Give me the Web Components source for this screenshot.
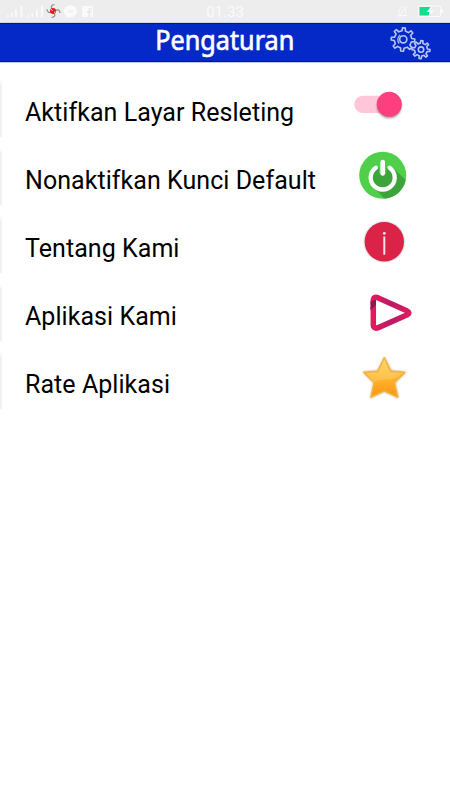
<!DOCTYPE html>
<html lang="id">
<head>
<meta charset="utf-8">
<title>Pengaturan</title>
<style>
  body {
    margin: 0;
    background: #fff;
    font-family: Roboto, "Liberation Sans", sans-serif;
  }
</style>
</head>
<body>
<settings-page></settings-page>

<script>
class StatusBar extends HTMLElement {
  constructor() {
    super();
    this.shadowDom = this.attachShadow({ mode: 'open' });
  }

  connectedCallback() {
    this.render();
  }

  render() {
    this.shadowDom.innerHTML = `
        <style>
          :host {
            display: grid;
            grid-template-columns: 200px 50px 200px;
            height: 23px;
            box-sizing: border-box;
            background: #ededed;
            border-bottom: 1px solid #d5d5e0;
          }

          svg {
            display: block;
          }

          .clock {
            color: #fbfbfb;
            font-size: 15px;
            line-height: 24px;
            text-align: center;
            white-space: nowrap;
          }
        </style>

        <svg width="200" height="22" viewBox="0 0 200 22">
          <g fill="#fafafa">
            <path d="M7 15h1.600v2H7zM11 13h1.600v4H11zM15 9.500h1.800v7.500H15zM20.500 6h2v11h-2z"/>
            <path d="M27.500 15h1.600v2h-1.600zM31.500 13h1.600v4h-1.600zM36 9.500h1.800v7.500H36zM41 6h2v11h-2z"/>
            <path d="M70.500 5.200c-3.700 0-6.500 2.600-6.500 6 0 1.900.9 3.500 2.300 4.600v2.500l2.200-1.300c.6.200 1.300.2 2 .2 3.700 0 6.500-2.600 6.500-6s-2.800-6-6.500-6z"/>
            <rect x="82" y="6" width="11" height="11" rx=".8"/>
          </g>
          <path d="M66.800 13l3-3.200 1.700 1.700 2.800-1.700-3 3.200-1.700-1.700z" fill="#e8e8e8"/>
          <path d="M88.500 17v-4.300H87V11h1.500V9.800c0-1.400.8-2.100 2.200-2.100h1.100v1.600h-.8c-.6 0-.8.300-.8.800V11h1.600l-.3 1.700h-1.300V17z" fill="#e8e8e8"/>
          <g fill="none" stroke="#8c8c8c" stroke-width="1.200">
            <path d="M54.500 4.500c-3 .3-4 2.200-2.500 4"/>
            <path d="M60 13c-.2-3-2.300-4-4.200-2.500"/>
            <path d="M51.500 17.500c3-.2 4.200-2 2.700-4"/>
            <path d="M47 9.300c.2 3 2.200 3.900 4.200 2.400"/>
          </g>
          <circle cx="53" cy="11" r="3" fill="#dd1c20"/>
          <path d="M51 9.500l1.500 1M54 12.500l1.200-.8" stroke="#fff" stroke-width=".9"/>
        </svg>
        <div class="clock">01.33</div>
        <svg width="200" height="22" viewBox="250 0 200 22">
          <g fill="none" stroke="#fafafa" stroke-width="1">
            <path d="M398 15.500c1.500-1.500 1.500-3 1.500-5 0-2 1.300-3.500 3-3.500s3 1.500 3 3.500c0 2 0 3.500 1.500 5zM401.500 17.200h2M398 17.500l9-12"/>
            <rect x="418.500" y="6" width="22" height="10.500" rx="1"/>
          </g>
          <path d="M441 9h2v4h-2z" fill="#fafafa"/>
          <path d="M419.500 7H430l-1 8.500h-9.500z" fill="#11dd8b"/>
          <path d="M431 7l-4.500 5h3.200l-1 3.500 5.300-5h-3.500z" fill="#fff"/>
        </svg>
        `;
  }
}

class GearIcon extends HTMLElement {
  constructor() {
    super();
    this.shadowDom = this.attachShadow({ mode: 'open' });
  }

  connectedCallback() {
    this.render();
  }

  // outline with flat teeth, evenly spread round the centre
  gear(cx, cy, inner, outer, teeth, turn) {
    const step = Math.PI * 2 / teeth;
    const points = [];
    for (let i = 0; i < teeth; i++) {
      const a = i * step + turn;
      [[-0.25, inner], [-0.15, outer], [0.15, outer], [0.25, inner]].forEach(([t, r]) => {
        points.push(`${(cx + r * Math.cos(a + t * step)).toFixed(2)},${(cy + r * Math.sin(a + t * step)).toFixed(2)}`);
      });
    }
    return `<polygon points="${points.join(' ')}"/>`;
  }

  render() {
    this.shadowDom.innerHTML = `
        <style>
          :host {
            display: block;
            width: 44px;
            height: 39px;
          }

          svg {
            display: block;
          }
        </style>

        <svg width="44" height="39" viewBox="388 23 44 39" fill="none" stroke="#b9c6f6" stroke-width="1.600" stroke-linejoin="round">
          ${this.gear(403, 39.5, 8.8, 11.8, 8, 0.08)}
          <circle cx="403.300" cy="39.300" r="3.600"/>
          <path d="M399.200 43.500a5.800 5.800 0 0 1 1-8.500" stroke-width="1.200"/>
          ${this.gear(421, 49.6, 6.5, 9, 8, 0.1)}
          <circle cx="421" cy="49.600" r="2.700"/>
        </svg>
        `;
  }
}

class AppHeader extends HTMLElement {
  constructor() {
    super();
    this.shadowDom = this.attachShadow({ mode: 'open' });
  }

  connectedCallback() {
    this.render();
  }

  render() {
    this.shadowDom.innerHTML = `
        <style>
          :host {
            display: grid;
            grid-template-columns: 1fr 138px 1fr;
            height: 39px;
            box-sizing: border-box;
            background: #0529c7;
            box-shadow: inset 0 1px #0412a0, inset 0 -1px #0412a0, 0 1px #c3c8ee;
          }

          .title {
            grid-column: 2;
            display: block;
            overflow: visible;
          }

          gear-icon {
            justify-self: end;
            margin-right: 18px;
          }
        </style>

        <svg class="title" width="138" height="39" viewBox="156 23 138 39">
          <text x="155.300" y="50" textLength="139" lengthAdjust="spacingAndGlyphs" fill="#fff" stroke="#fff" stroke-width=".7" font-family="Noto Sans, Open Sans, sans-serif" font-size="28">Pengaturan</text>
        </svg>
        <gear-icon></gear-icon>
        `;
  }
}

class SettingRow extends HTMLElement {
  constructor() {
    super();
    this.shadowDom = this.attachShadow({ mode: 'open' });
  }

  connectedCallback() {
    this.render();
  }

  render() {
    this.shadowDom.innerHTML = `
        <style>
          :host {
            display: flex;
            height: 68px;
          }

          .edge {
            width: 2px;
            height: 57px;
            margin: 2px 23px 0 0;
            background: linear-gradient(#fff, #f1f1f1 6px);
          }

          .label {
            flex: 1;
            color: #000;
            font-size: 25px;
            line-height: 70px;
            letter-spacing: .05px;
            white-space: nowrap;
          }

          .icon {
            width: 70px;
            margin-right: 30px;
          }
        </style>

        <div class="edge"></div>
        <div class="label"><slot></slot></div>
        <div class="icon"><slot name="icon"></slot></div>
        `;
  }
}

class SettingsPage extends HTMLElement {
  constructor() {
    super();
    this.shadowDom = this.attachShadow({ mode: 'open' });
  }

  connectedCallback() {
    this.render();
  }

  render() {
    this.shadowDom.innerHTML = `
        <style>
          :host {
            display: block;
            height: 800px;
            overflow: hidden;
            background: #fff;
          }

          .list {
            padding-top: 16px;
          }

          svg {
            display: block;
            width: 70px;
            height: 68px;
          }
        </style>

        <status-bar></status-bar>
        <app-header></app-header>
        <div class="list">
          <setting-row>Aktifkan Layar Resleting
            <svg slot="icon" viewBox="0 0 70 68">
              <defs>
                <filter id="soft" x="-30%" y="-30%" width="160%" height="160%"><feGaussianBlur stdDeviation="1.100"/></filter>
              </defs>
              <rect x="4.300" y="17.700" width="42" height="17.400" rx="8.700" fill="#ffc5d8"/>
              <circle cx="39.300" cy="28" r="12.300" fill="#000" opacity=".38" filter="url(#soft)"/>
              <circle cx="39.300" cy="26.300" r="12.500" fill="#fd3f7f"/>
            </svg>
          </setting-row>
          <setting-row>Nonaktifkan Kunci Default
            <svg slot="icon" viewBox="0 0 70 68">
              <defs>
                <clipPath id="disc"><circle cx="32.700" cy="29.300" r="23.500"/></clipPath>
              </defs>
              <circle cx="32.700" cy="29.300" r="23.500" fill="#50d04a"/>
              <path d="M43 21.500L62 40.500V60H42L22.500 40.500z" fill="#3da43b" clip-path="url(#disc)"/>
              <circle cx="32.700" cy="31.300" r="10.500" fill="#3da43b"/>
              <path d="M25.800 21.700a12 12 0 1 0 13.800 0" fill="none" stroke="#fff" stroke-width="4.300" stroke-linecap="round"/>
              <path d="M32.700 16v11.500" stroke="#50d04a" stroke-width="7.500"/>
              <path d="M32.700 16v11.500" stroke="#fff" stroke-width="4.600" stroke-linecap="round"/>
            </svg>
          </setting-row>
          <setting-row>Tentang Kami
            <svg slot="icon" viewBox="0 0 70 68">
              <circle cx="34.300" cy="27.700" r="20.900" fill="#e8e4e5"/>
              <circle cx="34.300" cy="27.700" r="19.700" fill="#db2247"/>
              <circle cx="34.300" cy="19.300" r="1.400" fill="#fde4e9"/>
              <path d="M34.300 22.500v18.200" stroke="#fde4e9" stroke-width="2"/>
            </svg>
          </setting-row>
          <setting-row>Aplikasi Kami
            <svg slot="icon" viewBox="0 0 70 68">
              <defs>
                <linearGradient id="play" x1="0" y1="0" x2="1" y2="0">
                  <stop offset="0" stop-color="#e3195f"/>
                  <stop offset=".5" stop-color="#b91c63"/>
                  <stop offset="1" stop-color="#e01a60"/>
                </linearGradient>
              </defs>
              <path d="M23.300 19v23.300q0 5.400 5 3.300l28.500-12.600q4-2 0-4.200l-28.500-12.900q-5-2-5 3.100z" fill="none" stroke="url(#play)" stroke-width="5.500" stroke-linejoin="round"/>
              <path d="M20.600 25.500l5.400-8V18v4L20.600 28z" fill="#a81a5a"/>
              <path d="M20.600 19l5.400-1v5L20.600 28z" fill="#8f1653"/>
            </svg>
          </setting-row>
          <setting-row>Rate Aplikasi
            <svg slot="icon" viewBox="0 0 70 68">
              <defs>
                <linearGradient id="gold" x1="0" y1="0" x2="0" y2="1">
                  <stop offset="0" stop-color="#ffd468"/>
                  <stop offset=".45" stop-color="#ffb935"/>
                  <stop offset="1" stop-color="#f9940f"/>
                </linearGradient>
                <filter id="halo" x="-20%" y="-20%" width="140%" height="140%"><feGaussianBlur stdDeviation="1"/></filter>
              </defs>
              <path d="M34.300 7.500l6.800 13.500 14.400 1.200-10.700 10.600 3.400 14.900-13.900-6.500-13.700 6.500 3.400-14.900-10.800-10.600 14.600-1.200z" fill="#a77a20" stroke="#a77a20" opacity=".65" filter="url(#halo)"/>
              <path d="M34.300 7.800l6.500 13.400 14.200 1.100-10.700 10.300 3.400 14.600-13.400-6.400-13.400 6.400 3.400-14.600-10.700-10.300 14.200-1.100z" fill="url(#gold)" stroke="#f7b03a" stroke-width="1.300" stroke-linejoin="round"/>
              <path d="M34.300 10l5.500 12 12.400 1.200q-6 6.200-14 6.300-10 .1-14.700 3l-7-9.300 12.700-1.200z" fill="#ffe08a" opacity=".3"/>
            </svg>
          </setting-row>
        </div>
        `;
  }
}

customElements.define('status-bar', StatusBar);
customElements.define('gear-icon', GearIcon);
customElements.define('app-header', AppHeader);
customElements.define('setting-row', SettingRow);
customElements.define('settings-page', SettingsPage);
</script>
</body>
</html>
